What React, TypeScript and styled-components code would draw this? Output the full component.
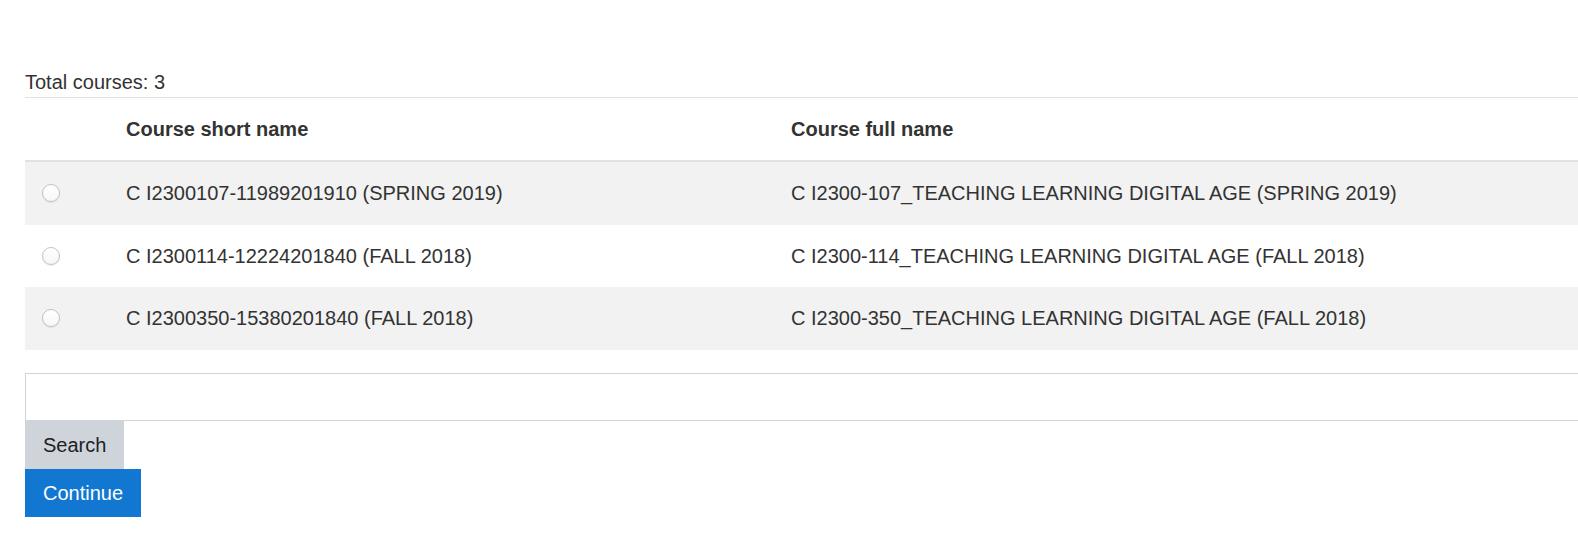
import React from 'react';
import styled, {createGlobalStyle} from "styled-components";

const GlobalStyle = createGlobalStyle`
  html, body {
    margin: 0;
    padding: 0;
    background: #fff;
    overflow: hidden;
  }

  body {
    font-family: "Liberation Sans", Arial, sans-serif;
    font-size: 20px;
    line-height: 30px;
    color: #333;
  }
`

type Course = {
    id: number;
    shortName: string;
    fullName: string;
};

const courses: Course[] = [
    {id: 1, shortName: "C I2300107-11989201910 (SPRING 2019)", fullName: "C I2300-107_TEACHING LEARNING DIGITAL AGE (SPRING 2019)"},
    {id: 2, shortName: "C I2300114-12224201840 (FALL 2018)", fullName: "C I2300-114_TEACHING LEARNING DIGITAL AGE (FALL 2018)"},
    {id: 3, shortName: "C I2300350-15380201840 (FALL 2018)", fullName: "C I2300-350_TEACHING LEARNING DIGITAL AGE (FALL 2018)"},
];

export default function App() {
    return (
        <>
            <GlobalStyle/>
            <Page>
                <Total>Total courses: 3</Total>
                <Table>
                    <colgroup>
                        <col style={{width: 85}}/>
                        <col style={{width: 665}}/>
                        <col/>
                    </colgroup>
                    <thead>
                    <tr>
                        <HeadCell></HeadCell>
                        <HeadCell>Course short name</HeadCell>
                        <HeadCell>Course full name</HeadCell>
                    </tr>
                    </thead>
                    <tbody>
                    {courses.map((c, i) => (
                        <Row key={c.id} $striped={i % 2 === 0}>
                            <Cell><Radio type={"radio"} name={"course"}/></Cell>
                            <Cell>{c.shortName}</Cell>
                            <Cell>{c.fullName}</Cell>
                        </Row>
                    ))}
                    </tbody>
                </Table>
                <SearchField type={"text"}/>
                <Button $variant={"secondary"}>Search</Button>
                <Button $variant={"primary"}>Continue</Button>
            </Page>
        </>
    );
}

const Page = styled.div`
  display: flex;
  flex-direction: column;
  align-items: flex-start;
  padding: 67px 0 0 25px;
  width: 1640px;
`

const Total = styled.div`
  font-size: 20px;
  line-height: 30px;
`

const Table = styled.table`
  width: 1620px;
  border-collapse: collapse;
  table-layout: fixed;
  border-top: 1px solid #dee2e6;
`

const HeadCell = styled.th`
  text-align: left;
  font-weight: bold;
  padding: 16px;
  line-height: 30px;
  border-bottom: 2px solid #dee2e6;
  color: #333;
`

const Row = styled.tr<{ $striped: boolean }>`
  background: ${p => p.$striped ? "#f2f2f2" : "#fff"};
`

const Cell = styled.td`
  padding: 16px;
  line-height: 30px;
  height: 30.5px;
  vertical-align: middle;
  white-space: nowrap;
`

const Radio = styled.input`
  appearance: none;
  display: block;
  width: 18px;
  height: 18px;
  margin: 0 0 0 1px;
  border-radius: 50%;
  border: 1px solid #c2c2c2;
  background: linear-gradient(#fff, #f7f7f7);
  box-shadow: 0 1px 1px rgba(0, 0, 0, 0.08);
`

const SearchField = styled.input`
  margin-top: 23px;
  width: 1620px;
  height: 48px;
  box-sizing: border-box;
  border: 1px solid #ced4da;
  background: #fff;
  padding: 8px 16px;
  font: inherit;
  outline: none;
`

const Button = styled.button<{ $variant: "primary" | "secondary" }>`
  font-family: "Liberation Sans", Arial, sans-serif;
  font-size: 20px;
  line-height: 30px;
  padding: 8px 17px;
  border: 1px solid ${p => p.$variant === "primary" ? "#1177d1" : "#ced4da"};
  border-radius: 0;
  background: ${p => p.$variant === "primary" ? "#1177d1" : "#ced4da"};
  color: ${p => p.$variant === "primary" ? "#fff" : "#1d2125"};
  cursor: pointer;
`
